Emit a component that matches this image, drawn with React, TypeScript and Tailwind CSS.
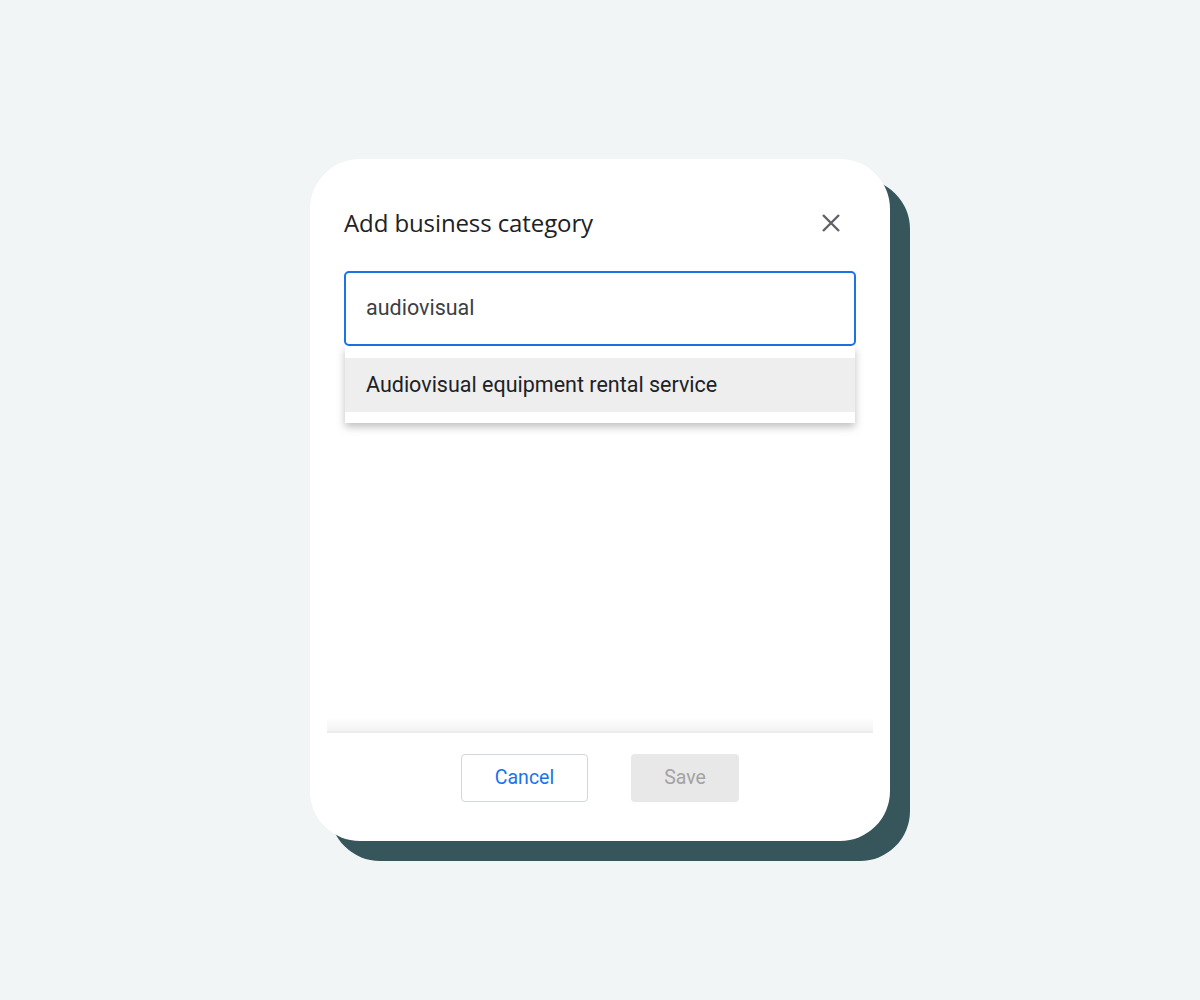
import React from "react";

export default function App() {
  return (
    <div className="w-[1200px] h-[1000px] bg-[#f1f5f6] flex items-start justify-center pt-[159px]" style={{ fontFamily: "Roboto, 'Open Sans', sans-serif" }}>
      <div className="relative w-[580px] h-[682px]">
        <div className="absolute left-[20px] top-[20px] w-[580px] h-[682px] rounded-[50px] bg-[#36565c]" />
        <div className="relative w-[580px] h-[682px] rounded-[50px] bg-white flex flex-col">
          <div className="flex items-center justify-between pl-[34px] pr-[49px] pt-[40px] h-[112px] pb-[24px]">
            <h1 className="text-[24px] text-[#202124] tracking-[-0.1px]" style={{ fontFamily: "'Open Sans', Roboto, sans-serif" }}>Add business category</h1>
            <svg width="20" height="20" viewBox="0 0 20 20">
              <path d="M2 2 L18 18 M18 2 L2 18" stroke="#5f6368" strokeWidth="2.4" strokeLinecap="butt" />
            </svg>
          </div>
          <div className="px-[34px] relative">
            <div className="h-[75px] border-2 border-[#1a73e8] rounded-[5px] flex items-center pl-[20px] text-[21.5px] text-[#3c4043]">
              audiovisual
            </div>
            <div className="mx-[1px] bg-white shadow-[0_4px_8px_rgba(0,0,0,0.25)] pt-[12px] pb-[11px]">
              <div className="h-[54px] bg-[#eeeeee] flex items-center pl-[21px] text-[21.5px] text-[#202124]">
                Audiovisual equipment rental service
              </div>
            </div>
          </div>
          <div className="flex-1" />
          <div className="mx-[17px] h-[16px] bg-gradient-to-b from-white to-[#f3f3f3] border-b-2 border-[#ececec]" />
          <div className="flex justify-center gap-[43px] pt-[21px] pb-[39px]">
            <button className="w-[127px] h-[48px] rounded-[4px] border border-[#d3d6da] text-[#1a73e8] text-[19.5px] bg-white">Cancel</button>
            <button className="w-[108px] h-[48px] rounded-[4px] bg-[#e8e8e8] text-[#a3a3a3] text-[19.5px]">Save</button>
          </div>
        </div>
      </div>
    </div>
  );
}
